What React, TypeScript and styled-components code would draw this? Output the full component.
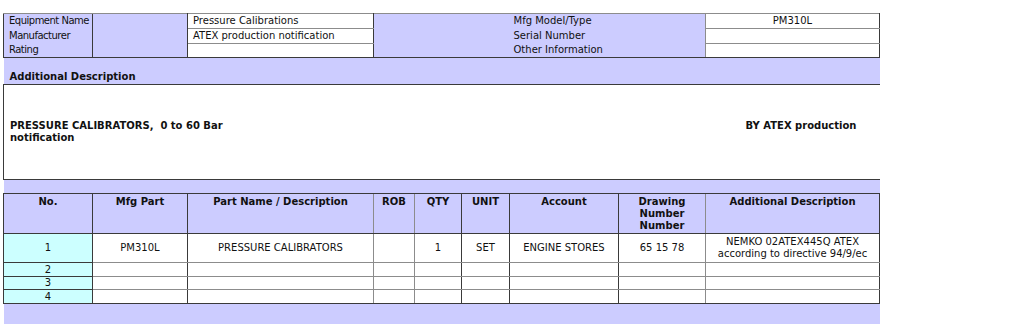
import React from 'react';
import styled, { createGlobalStyle, css } from 'styled-components';

const GlobalStyle = createGlobalStyle`
  html, body {
    margin: 0;
    background: #ffffff;
  }
  body {
    padding: 13px 0 0 3px;
  }
`;

const LAVENDER = '#ccccff';
const CYAN = '#ccffff';
const DARK = '#3a3a3a';
const GRAY = '#8c8c8c';

type Tone = 'dark' | 'gray';

const line = (tone?: Tone) => (tone ? `1px solid ${tone === 'dark' ? DARK : GRAY}` : 'none');

const Sheet = styled.table`
  border-collapse: collapse;
  table-layout: fixed;
  width: 876px;
  font-family: "DejaVu Sans", Verdana, sans-serif;
  font-size: 10px;
  color: #111;
`;

const Row = styled.tr<{ $h: number }>`
  height: ${({ $h }) => $h}px;
`;

interface CellProps {
  $bg?: 'lav' | 'cyan' | 'white';
  $align?: 'left' | 'center';
  $valign?: 'top' | 'middle' | 'bottom';
  $bold?: boolean;
  $t?: Tone;
  $r?: Tone;
  $b?: Tone;
  $l?: Tone;
}

const Cell = styled.td<CellProps>`
  padding: 0 5px;
  line-height: 12px;
  white-space: pre;
  background: ${({ $bg }) => ($bg === 'lav' ? LAVENDER : $bg === 'cyan' ? CYAN : '#ffffff')};
  text-align: ${({ $align }) => $align || 'left'};
  vertical-align: ${({ $valign }) => $valign || 'middle'};
  font-weight: ${({ $bold }) => ($bold ? 700 : 400)};
  ${({ $t, $r, $b, $l }) => css`
    border-top: ${line($t)};
    border-right: ${line($r)};
    border-bottom: ${line($b)};
    border-left: ${line($l)};
  `}
`;

// left-hand labels of the equipment block sit in a narrow column
const LabelCell = styled(Cell)<{ $tight?: boolean }>`
  padding: 0 0 0 ${({ $tight }) => ($tight ? 5 : 4)}px;
  letter-spacing: ${({ $tight }) => ($tight ? '-0.5px' : 'normal')};
`;

const HeadCell = styled(Cell).attrs({ as: 'th' })`
  padding-top: 2px;
  font-weight: 700;
  text-align: center;
  vertical-align: top;
`;

const BandCell = styled(Cell)`
  padding: 0 6px 1px;
`;

const NoteCell = styled(Cell)`
  padding: 0 6px;
  font-weight: 700;
`;

const SideNote = styled(Cell)`
  padding: 0 0 12px 40px;
  font-weight: 700;
`;

const colWidths = [89, 95, 186, 41, 47, 48, 109, 87, 174];

const headers = [
  'No.',
  'Mfg Part',
  'Part Name / Description',
  'ROB',
  'QTY',
  'UNIT',
  'Account',
  'Drawing\nNumber\nNumber',
  'Additional Description',
];

// divider tone on the right side of each column in the parts grid
const dividers: Tone[] = ['dark', 'dark', 'gray', 'gray', 'dark', 'dark', 'dark', 'gray', 'dark'];

interface Part {
  no: number;
  values: string[];
  height: number;
  bottom: Tone;
}

const parts: Part[] = [
  {
    no: 1,
    values: [
      'PM310L',
      'PRESSURE CALIBRATORS',
      '',
      '1',
      'SET',
      'ENGINE STORES',
      '65 15 78',
      'NEMKO 02ATEX445Q ATEX\naccording to directive 94/9/ec',
    ],
    height: 29,
    bottom: 'gray',
  },
  { no: 2, values: Array(8).fill(''), height: 14, bottom: 'gray' },
  { no: 3, values: Array(8).fill(''), height: 12, bottom: 'gray' },
  { no: 4, values: Array(8).fill(''), height: 14, bottom: 'dark' },
];

const equipment = [
  { label: 'Equipment Name', value: 'Pressure Calibrations', model: 'Mfg Model/Type', modelValue: 'PM310L', h: 15 },
  { label: 'Manufacturer', value: 'ATEX production notification', model: 'Serial Number', modelValue: '', h: 15 },
  { label: 'Rating', value: '', model: 'Other Information', modelValue: '', h: 14 },
];

export default function App() {
  return (
    <>
      <GlobalStyle />
      <Sheet>
        <colgroup>
          {colWidths.map((w, i) => (
            <col key={i} style={{ width: w }} />
          ))}
        </colgroup>
        <tbody>
          {equipment.map((e, i) => {
            const first = i === 0;
            const last = i === equipment.length - 1;
            return (
              <Row key={e.label} $h={e.h}>
                <LabelCell $tight $bg="lav" $l="dark" $t={first ? 'gray' : undefined} $b={last ? 'dark' : undefined}>
                  {e.label}
                </LabelCell>
                {first && <Cell $bg="lav" rowSpan={3} $t="gray" $l="dark" $r="dark" $b="dark" />}
                <Cell $bg="white" $t="gray" $b={last ? 'dark' : 'gray'} $r="dark">
                  {e.value}
                </Cell>
                {first && <Cell $bg="lav" colSpan={3} rowSpan={3} $t="gray" $b="dark" />}
                <LabelCell $bg="lav" colSpan={2} $t={first ? 'gray' : undefined} $b={last ? 'dark' : undefined}>
                  {e.model}
                </LabelCell>
                <Cell $bg="white" $align="center" $t="gray" $l="gray" $r="dark" $b={last ? 'dark' : 'gray'}>
                  {e.modelValue}
                </Cell>
              </Row>
            );
          })}

          <Row $h={27}>
            <BandCell $bg="lav" colSpan={9} $valign="bottom" $bold $b="dark">
              Additional Description
            </BandCell>
          </Row>

          <Row $h={95}>
            <NoteCell $bg="white" colSpan={8} $l="dark" $b="dark">
              {'PRESSURE CALIBRATORS,  0 to 60 Bar\nnotification'}
            </NoteCell>
            <SideNote $bg="white" $b="dark">
              BY ATEX production
            </SideNote>
          </Row>

          <Row $h={14}>
            <Cell $bg="lav" colSpan={9} $b="dark" />
          </Row>

          <Row $h={40}>
            {headers.map((h, i) => (
              <HeadCell key={h} $bg="lav" $l={i === 0 ? 'dark' : undefined} $r={dividers[i]} $t="dark" $b="dark">
                {h}
              </HeadCell>
            ))}
          </Row>

          {parts.map((p) => (
            <Row key={p.no} $h={p.height}>
              <Cell $bg="cyan" $align="center" $l="dark" $r="dark" $b="dark">
                {p.no}
              </Cell>
              {p.values.map((v, i) => (
                <Cell key={i} $bg="white" $align="center" $r={dividers[i + 1]} $b={p.bottom}>
                  {v}
                </Cell>
              ))}
            </Row>
          ))}

          <Row $h={24}>
            <Cell $bg="lav" colSpan={9} />
          </Row>
        </tbody>
      </Sheet>
    </>
  );
}
